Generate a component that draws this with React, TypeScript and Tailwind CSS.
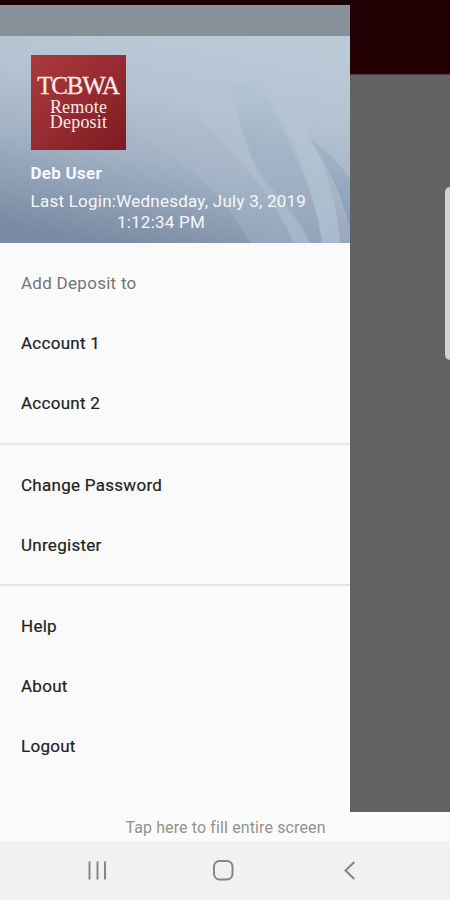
function HeaderArt() {
  return (
    <svg className="absolute inset-0 h-full w-full" viewBox="0 0 350 238" preserveAspectRatio="none" aria-hidden="true">
      <defs>
        <linearGradient id="sky" gradientUnits="userSpaceOnUse" x1="190" y1="20" x2="145" y2="248">
          <stop offset="0" stopColor="#bacad7" />
          <stop offset="0.32" stopColor="#b3c3d2" />
          <stop offset="0.6" stopColor="#a2b2c4" />
          <stop offset="1" stopColor="#7a8aa3" />
        </linearGradient>
        <linearGradient id="veil" gradientUnits="userSpaceOnUse" x1="0" y1="90" x2="0" y2="238">
          <stop offset="0" stopColor="#b0c0d1" stopOpacity="0" />
          <stop offset="0.5" stopColor="#abbbcd" stopOpacity="0.4" />
          <stop offset="1" stopColor="#a1b3c7" stopOpacity="0.5" />
        </linearGradient>
        <linearGradient id="ray" gradientUnits="userSpaceOnUse" x1="0" y1="85" x2="0" y2="238">
          <stop offset="0" stopColor="#bccbda" stopOpacity="0" />
          <stop offset="0.4" stopColor="#b8c8d8" stopOpacity="0.5" />
          <stop offset="1" stopColor="#b0c2d4" stopOpacity="0.7" />
        </linearGradient>
        <linearGradient id="shade" gradientUnits="userSpaceOnUse" x1="0" y1="65" x2="0" y2="238">
          <stop offset="0" stopColor="#93a6bb" stopOpacity="0" />
          <stop offset="0.4" stopColor="#93a6bb" stopOpacity="0.4" />
          <stop offset="1" stopColor="#8397af" stopOpacity="0.3" />
        </linearGradient>
        <linearGradient id="wedge" gradientUnits="userSpaceOnUse" x1="0" y1="130" x2="0" y2="225">
          <stop offset="0" stopColor="#8fa3ba" stopOpacity="0.25" />
          <stop offset="1" stopColor="#7c92ae" stopOpacity="0.7" />
        </linearGradient>
      </defs>
      <rect width="350" height="238" fill="url(#sky)" />
      <path d="M130 126 C182 153 226 190 250 238 L350 238 L350 90 L130 90Z" fill="url(#veil)" />
      <path d="M180 90 C215 135 270 175 293 238 L310 238 C298 204 270 188 254 155 C246 136 240 115 230 90Z" fill="url(#ray)" opacity="0.75" />
      <path d="M230 80 C238 120 252 164 270 185 C286 204 300 218 309 238 L325 238 C314 190 290 135 258 75Z" fill="url(#shade)" opacity="0.7" />
      <path d="M265 80 C292 130 315 185 322 238 L340 238 C337 190 320 145 290 90Z" fill="url(#ray)" />
      <path d="M306 130 C328 160 342 190 350 224 L350 174 C338 155 325 145 306 130Z" fill="url(#wedge)" />
    </svg>
  );
}

function Logo() {
  return (
    <div className="flex h-[95px] w-[95px] flex-col items-center bg-linear-to-br from-[#aa3a3f] via-[#962b31] to-[#7c1b20] pt-[17px] font-['Liberation_Serif',serif] text-[#f9ebe6]">
      <span className="text-[25px] leading-[27px] tracking-[-1.2px] whitespace-nowrap [-webkit-text-stroke:0.3px]">TCBWA</span>
      <span className="mt-px ml-px text-[18px] leading-[15px] tracking-[0.2px] whitespace-nowrap">Remote</span>
      <span className="ml-px text-[18px] leading-[15px] tracking-[0.2px] whitespace-nowrap">Deposit</span>
    </div>
  );
}

function Group({ items }: { items: string[] }) {
  return (
    <div className="flex flex-col pt-[11px] pb-[9px]">
      {items.map((item) => (
        <div
          key={item}
          className={`flex h-[60px] items-center pl-[21px] text-[17px] tracking-[0.28px] ${
            item === "Add Deposit to" ? "text-[#757575]" : "text-[#222222] [-webkit-text-stroke:0.2px]"
          }`}
        >
          {item}
        </div>
      ))}
    </div>
  );
}

export default function App() {
  return (
    <div className="flex h-[900px] w-[450px] flex-col overflow-hidden bg-[#fbfbfb] font-[Roboto,sans-serif]">
      <div className="h-[5px] shrink-0 bg-[#1d0002]" />
      <div className="flex h-[807px] shrink-0">
        <aside className="flex w-[350px] flex-col bg-[#fafafa]">
          <header className="relative h-[238px] shrink-0">
            <HeaderArt />
            <div className="relative flex flex-col">
              <div className="h-[31px] bg-[#88909a]" />
              <div className="flex flex-col pt-[19px] pl-[30.5px] text-[#f5f8fb]">
                <Logo />
                <div className="mt-[12px] text-[17px] leading-[22px] font-bold tracking-[0.25px]">Deb User</div>
                <div className="mt-[7px] w-[277px] text-center text-[17px] leading-[21px] tracking-[0.24px]">
                  <div className="text-left whitespace-nowrap">Last Login:Wednesday, July 3, 2019</div>
                  <div className="pr-[16px]">1:12:34 PM</div>
                </div>
              </div>
            </div>
          </header>
          <Group items={["Add Deposit to", "Account 1", "Account 2"]} />
          <div className="h-[2px] shrink-0 bg-[#e8e8e8]" />
          <div className="-mb-px">
            <Group items={["Change Password", "Unregister"]} />
          </div>
          <div className="h-[2px] shrink-0 bg-[#e3e3e3]" />
          <Group items={["Help", "About", "Logout"]} />
        </aside>
        <div className="flex w-[100px] flex-col bg-[#636363]">
          <div className="h-[70px] shrink-0 border-b border-[#443b3b] bg-[#220004]" />
          <div className="mt-[112px] ml-[95px] h-[173px] rounded-l-[7px] bg-[#d2d2d2]" />
        </div>
      </div>
      <div className="flex h-[29px] shrink-0 items-center justify-center pt-[2px] pl-px text-[16px] tracking-[0.12px] text-[#929292]">
        Tap here to fill entire screen
      </div>
      <nav className="flex h-[59px] shrink-0 items-center justify-between bg-[#f1f1f1] px-[85px] text-[#858585]">
        <svg className="h-6 w-6" viewBox="0 0 24 24" fill="none" stroke="currentColor" strokeWidth="2">
          <path d="M4.5 2.5v18M12.5 2.5v18M20 2.5v18" />
        </svg>
        <svg className="h-6 w-6" viewBox="0 0 24 24" fill="none" stroke="currentColor" strokeWidth="2">
          <rect x="1" y="2" width="18.5" height="18.5" rx="5.5" />
        </svg>
        <svg className="h-6 w-6" viewBox="0 0 24 24" fill="none" stroke="currentColor" strokeWidth="2">
          <path d="M13.3 3L4.5 11.5l8.8 8.5" />
        </svg>
      </nav>
    </div>
  );
}
